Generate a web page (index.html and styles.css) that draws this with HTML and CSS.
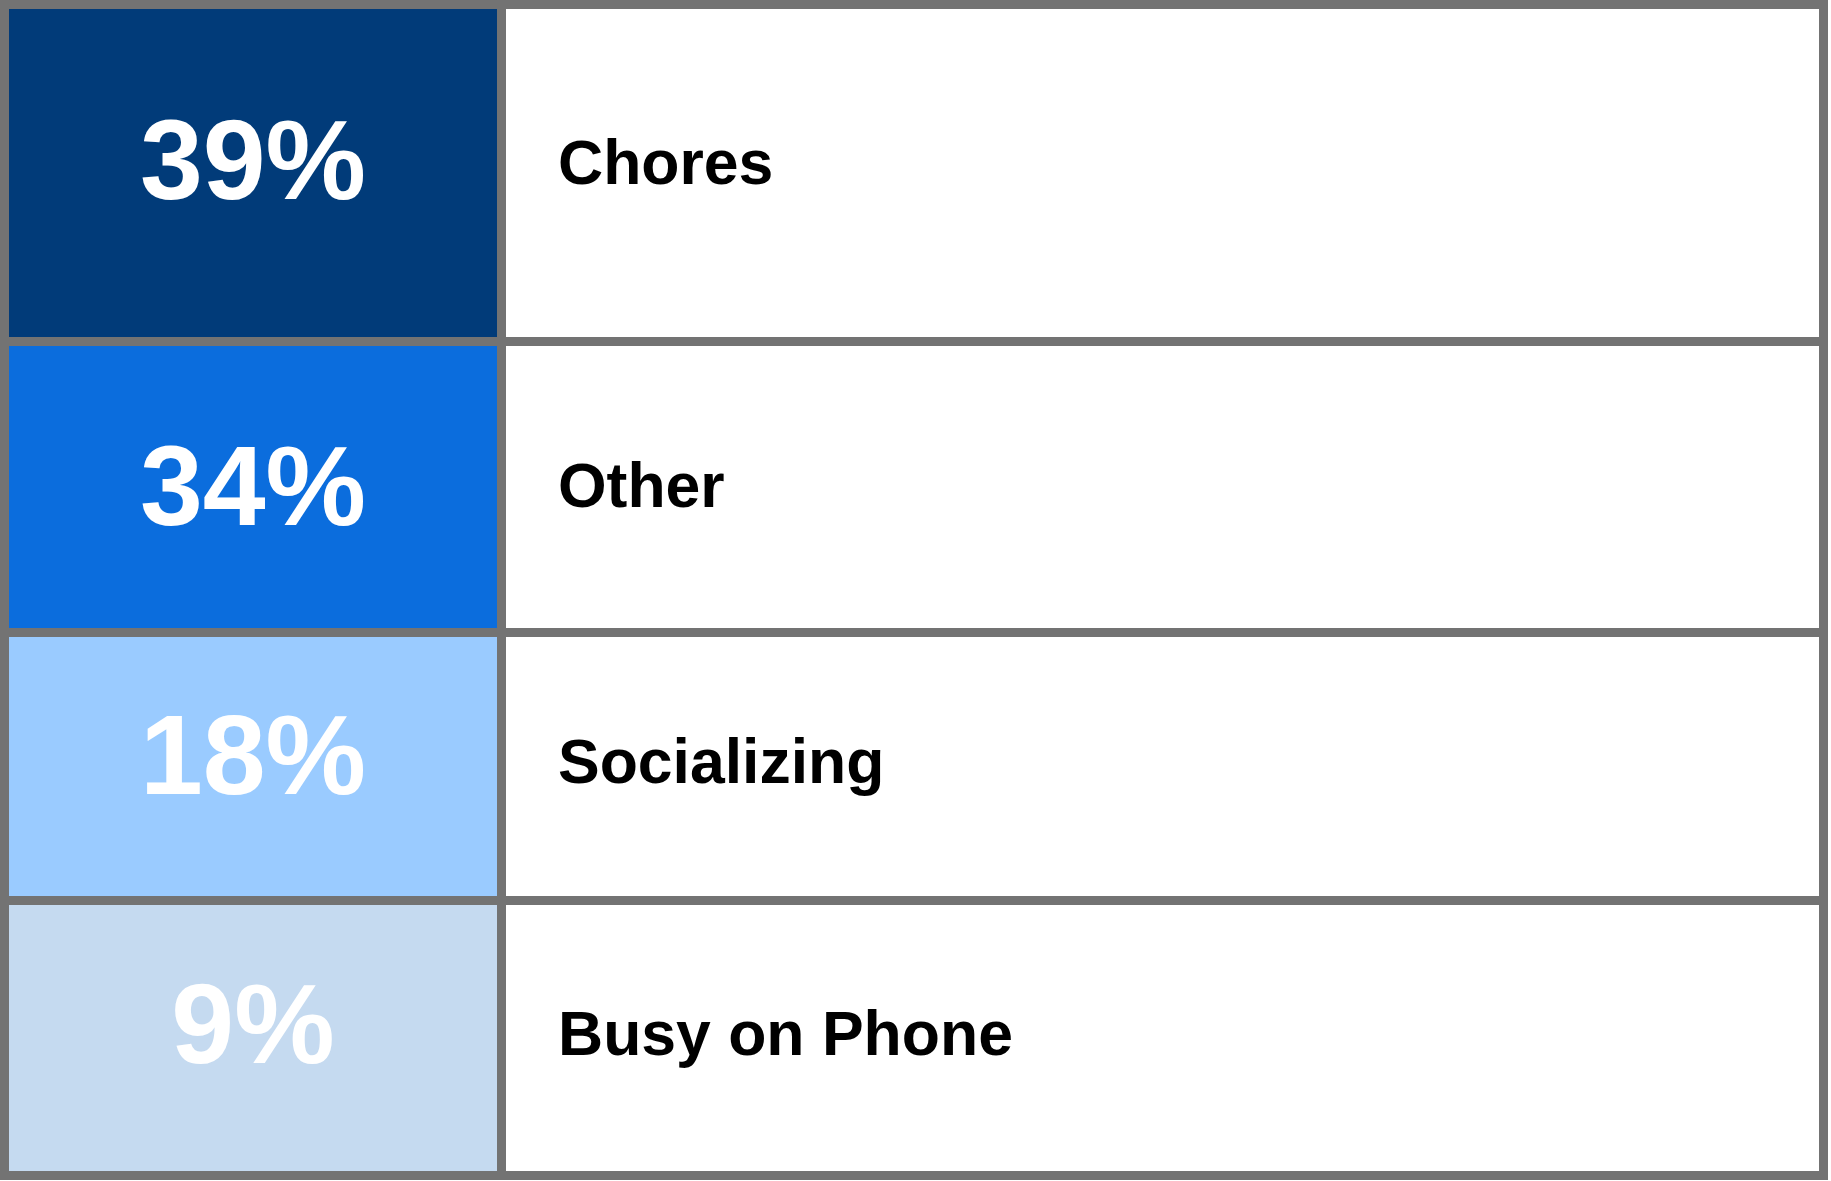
FILE: index.html
```html
<!DOCTYPE html>
<html>
<head>
<meta charset="utf-8">
<link rel="stylesheet" href="styles.css">
</head>
<body>
<div class="table">
  <div class="pct c1 r1">39%</div>
  <div class="label r1l">Chores</div>
  <div class="pct c2 r2">34%</div>
  <div class="label r2l">Other</div>
  <div class="pct c3 r3">18%</div>
  <div class="label r3l">Socializing</div>
  <div class="pct c4 r4">9%</div>
  <div class="label r4l">Busy on Phone</div>
</div>
</body>
</html>
```
FILE: styles.css
```css
html, body {
  margin: 0;
  padding: 0;
  background: #ffffff;
}
.table {
  display: grid;
  grid-template-columns: 488px 1313px;
  grid-template-rows: 328px 282px 259px 266px;
  gap: 9px;
  padding: 9px;
  width: 1828px;
  box-sizing: border-box;
  background: #737373;
  font-family: "Liberation Sans", Arial, sans-serif;
  font-weight: bold;
}
.pct {
  display: flex;
  align-items: center;
  justify-content: center;
  font-size: 113px;
  line-height: 1;
  color: #ffffff;
  box-sizing: border-box;
}
.label {
  display: flex;
  align-items: center;
  background: #ffffff;
  color: #000000;
  font-size: 62.5px;
  line-height: 1;
  padding-left: 52px;
  box-sizing: border-box;
}
.c1 { background: #013b79; }
.c2 { background: #0b6ddd; }
.c3 { background: #9acbff; }
.c4 { background: #c5daf0; }
.r1 { padding-bottom: 26px; }
.r2 { padding-bottom: 2px; }
.r3 { padding-bottom: 22px; }
.r4 { padding-bottom: 28px; }
.r1l { padding-bottom: 21px; }
.r2l { padding-bottom: 3px; }
.r3l { padding-bottom: 10px; }
.r4l { padding-bottom: 9px; }
```
